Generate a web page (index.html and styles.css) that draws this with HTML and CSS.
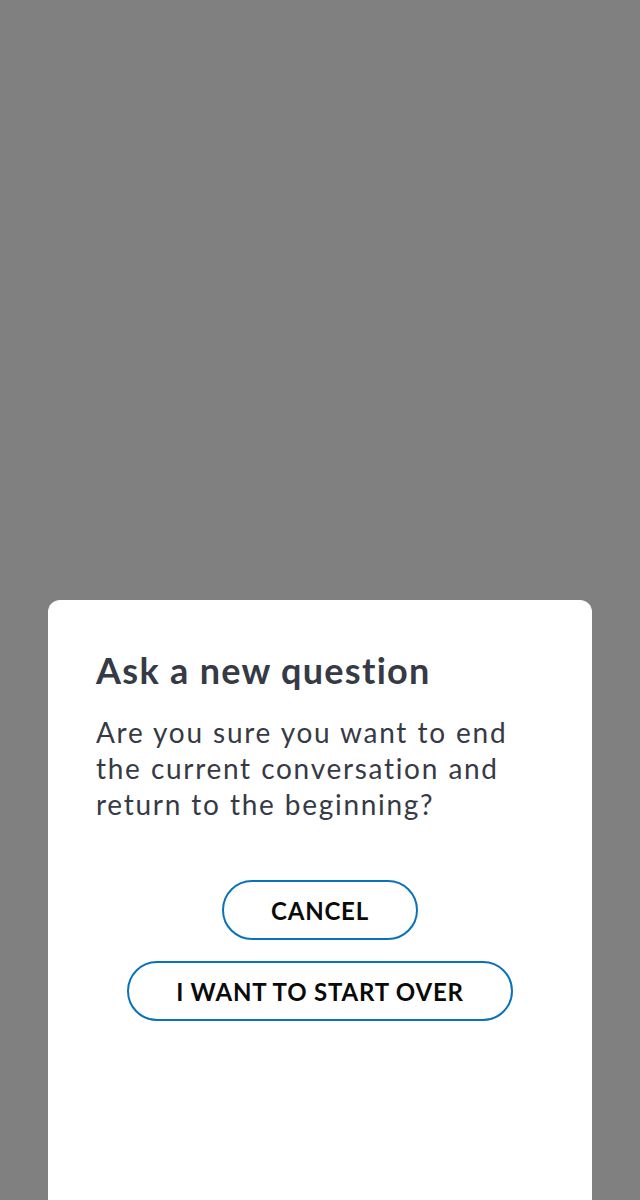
FILE: index.html
```html
<!DOCTYPE html>
<html>
<head>
<meta charset="utf-8">
<link rel="stylesheet" href="styles.css">
</head>
<body>
<div class="overlay">
  <div class="dialog">
    <h2 class="title">Ask a new question</h2>
    <p class="message">Are you sure you want to end the current conversation and return to the beginning?</p>
    <div class="actions">
      <button class="btn">CANCEL</button>
      <button class="btn">I WANT TO START OVER</button>
    </div>
  </div>
</div>
</body>
</html>
```
FILE: styles.css
```css
html, body {
  margin: 0;
  padding: 0;
  height: 100%;
}
body {
  background: #808080;
  font-family: Lato, "Open Sans", sans-serif;
}
.overlay {
  height: 1200px;
  display: flex;
  flex-direction: column;
  justify-content: flex-end;
  padding: 0 48px;
  overflow: hidden;
}
.dialog {
  background: #fff;
  border-radius: 12px 12px 0 0;
  height: 600px;
  padding: 48px 48px 0;
  box-sizing: border-box;
}
.title {
  margin: 0;
  font-size: 36px;
  font-weight: 700;
  color: #363a45;
  line-height: 44px;
  letter-spacing: 1.3px;
}
.message {
  margin: 22px 0 0;
  font-size: 28px;
  line-height: 36px;
  color: #363a45;
  letter-spacing: 1.7px;
  word-spacing: 0.5px;
}
.actions {
  margin-top: 58px;
  display: flex;
  flex-direction: column;
  align-items: center;
  gap: 21px;
}
.btn {
  height: 60px;
  padding: 0 47px;
  border: 2px solid #0a72b8;
  border-radius: 30px;
  background: #fff;
  font-family: Lato, sans-serif;
  font-weight: 700;
  font-size: 24px;
  letter-spacing: 0.8px;
  color: #0a0a0a;
}
```
